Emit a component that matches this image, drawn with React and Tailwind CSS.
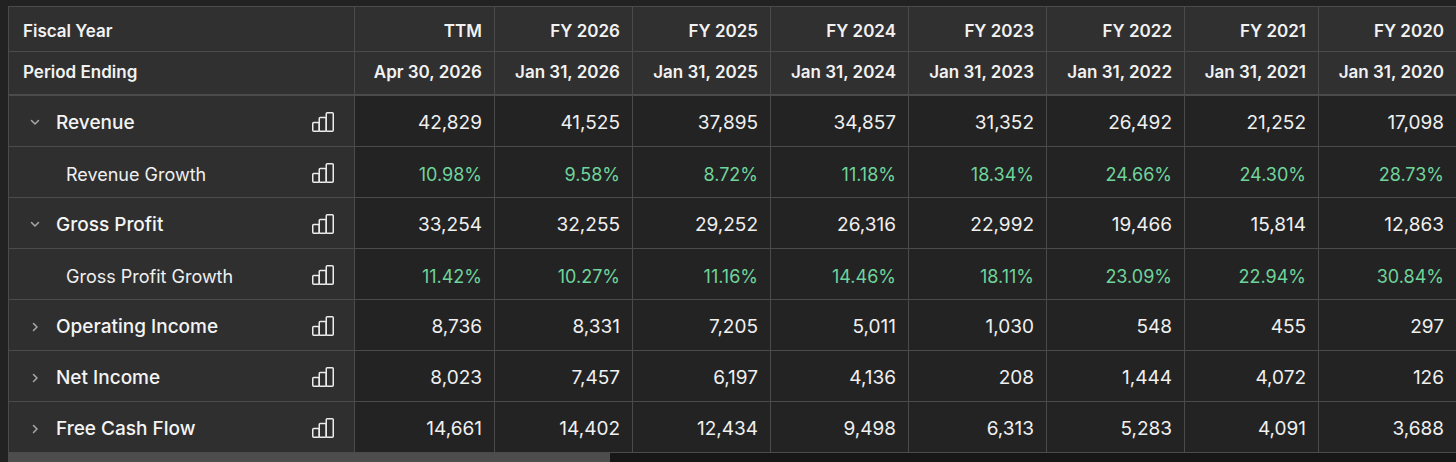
import React from "react";

const cols = [
  { y: "TTM", d: "Apr 30, 2026" },
  { y: "FY 2026", d: "Jan 31, 2026" },
  { y: "FY 2025", d: "Jan 31, 2025" },
  { y: "FY 2024", d: "Jan 31, 2024" },
  { y: "FY 2023", d: "Jan 31, 2023" },
  { y: "FY 2022", d: "Jan 31, 2022" },
  { y: "FY 2021", d: "Jan 31, 2021" },
  { y: "FY 2020", d: "Jan 31, 2020" },
];

const rows = [
  { label: "Revenue", kind: "open", v: ["42,829", "41,525", "37,895", "34,857", "31,352", "26,492", "21,252", "17,098"] },
  { label: "Revenue Growth", kind: "child", v: ["10.98%", "9.58%", "8.72%", "11.18%", "18.34%", "24.66%", "24.30%", "28.73%"] },
  { label: "Gross Profit", kind: "open", v: ["33,254", "32,255", "29,252", "26,316", "22,992", "19,466", "15,814", "12,863"] },
  { label: "Gross Profit Growth", kind: "child", v: ["11.42%", "10.27%", "11.16%", "14.46%", "18.11%", "23.09%", "22.94%", "30.84%"] },
  { label: "Operating Income", kind: "closed", v: ["8,736", "8,331", "7,205", "5,011", "1,030", "548", "455", "297"] },
  { label: "Net Income", kind: "closed", v: ["8,023", "7,457", "6,197", "4,136", "208", "1,444", "4,072", "126"] },
  { label: "Free Cash Flow", kind: "closed", v: ["14,661", "14,402", "12,434", "9,498", "6,313", "5,283", "4,091", "3,688"] },
];

function ChartIcon() {
  return (
    <svg width="22" height="20" viewBox="0 0 22 20" fill="none" stroke="#ececec" strokeWidth="1.5" strokeLinejoin="round">
      <rect x="0.75" y="10.5" width="6.5" height="8.75" rx="1" />
      <rect x="7.25" y="5.5" width="7" height="13.75" rx="1" />
      <rect x="14.25" y="0.75" width="7" height="18.5" rx="1" />
    </svg>
  );
}

function ChevronDown() {
  return (
    <svg width="10" height="7" viewBox="0 0 10 7" fill="none" stroke="#a8a8a8" strokeWidth="1.5" strokeLinecap="round" strokeLinejoin="round">
      <polyline points="1.5,1.5 5,5 8.5,1.5" />
    </svg>
  );
}

function ChevronRight() {
  return (
    <svg width="7" height="10" viewBox="0 0 7 10" fill="none" stroke="#a8a8a8" strokeWidth="1.5" strokeLinecap="round" strokeLinejoin="round">
      <polyline points="1.5,1.5 5,5 1.5,8.5" />
    </svg>
  );
}

export default function App() {
  return (
    <div
      className="w-[1456px] h-[462px] overflow-hidden bg-[#222222] pl-2 pt-[6px] flex flex-col"
      style={{ fontFamily: "Inter, 'Noto Sans', 'Liberation Sans', sans-serif" }}
    >
      <div className="grid w-max grid-cols-[345px_139px_137px_137px_137px_137px_137px_133px_137px] grid-rows-[44px_43px_repeat(7,50px)] gap-px bg-[#4b4b4b] pl-px pt-px pb-px">
        {/* header row 1 */}
        <div className="bg-[#303030] flex items-center pl-[14px] pt-[5px] text-[17px] font-semibold text-[#f2f2f2]">Fiscal Year</div>
        {cols.map((c) => (
          <div key={c.y} className="bg-[#303030] flex items-center justify-end pr-[12px] pt-[5px] text-[17px] font-semibold text-[#f2f2f2]">
            {c.y}
          </div>
        ))}
        {/* header row 2 */}
        <div className="bg-[#303030] mb-px flex items-center pl-[14px] text-[17px] font-semibold text-[#f2f2f2]">Period Ending</div>
        {cols.map((c) => (
          <div key={c.d} className="bg-[#303030] mb-px flex items-center justify-end pr-[12px] text-[17px] font-semibold text-[#f2f2f2]">
            {c.d}
          </div>
        ))}
        {/* data rows */}
        {rows.map((r) => (
          <React.Fragment key={r.label}>
            <div className="bg-[#2f2f2f] flex items-center pr-5">
              {r.kind === "child" ? (
                <span className="pl-[57px] pt-[4px] text-[18px] font-normal text-[#f0f0f0]">{r.label}</span>
              ) : (
                <>
                  <span className="w-[47px] pl-[21px] pt-[3px] flex items-center">
                    {r.kind === "open" ? <ChevronDown /> : <span className="pl-[2px] flex"><ChevronRight /></span>}
                  </span>
                  <span className="pt-[4px] text-[19px] font-medium text-[#f4f4f4]">{r.label}</span>
                </>
              )}
              <span className="ml-auto flex pt-[2px]">
                <ChartIcon />
              </span>
            </div>
            {r.v.map((v, i) => (
              <div
                key={i}
                className={
                  "bg-[#232323] flex items-center justify-end pr-[12px] pt-[4px] " +
                  (r.kind === "child" ? "text-[18px] text-[#6fd49c]" : "text-[19px] text-[#f0f0f0]")
                }
              >
                {v}
              </div>
            ))}
          </React.Fragment>
        ))}
      </div>
      <div className="flex h-[9px] w-[1448px]">
        <div className="w-[602px] bg-[#4d4d4d]"></div>
        <div className="flex-1 bg-[#171717]"></div>
      </div>
    </div>
  );
}
